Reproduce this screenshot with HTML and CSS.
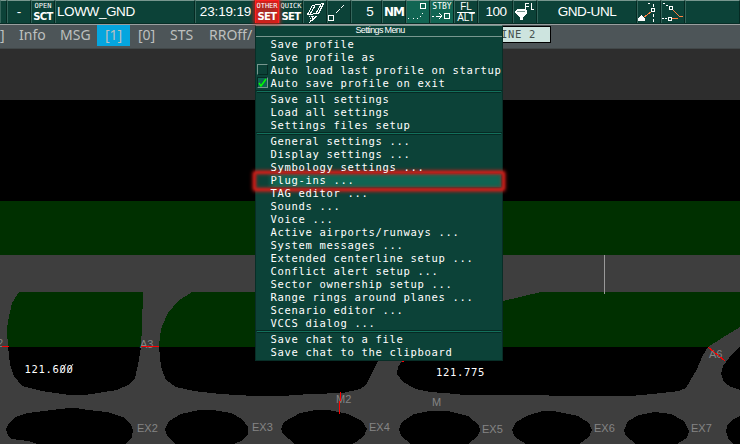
FILE: index.html
```
<!DOCTYPE html>
<html lang="en"><head><meta charset="utf-8"><title>Radar display</title><link rel="stylesheet" href="styles.css"></head>
<body>
<main class="screen">
<svg class="map" width="740" height="444" viewBox="0 0 740 444" shape-rendering="crispEdges">
<rect width="740" height="444" fill="#3e3e3e"/>
<rect y="48" width="740" height="52" fill="#2d2d2d"/>
<rect y="100" width="740" height="101" fill="#000"/>
<rect y="201" width="740" height="54" fill="#003000"/>
<path d="M8 347L7 330L8 321L12 303L19 292H143L142 326L141 347Z" fill="#003000"/>
<path d="M8 347H141L138 365L135 378L128 385L117 390L85 395H69L42 391L22 386L14 376L10 364Z"/>
<path d="M159 347L160 335L162 326L168 313L178 301L192 292H440V347Z" fill="#003000"/>
<path d="M159 347H385L378 361L366 385L360 389L343 393L310 394L282 396H255L220 394L194 391L176 387L166 380L161 367Z"/>
<path d="M440 310L503 301L541 292H740V327L722 338L708 347H440Z" fill="#003000"/>
<path d="M402 347H708L703 355L697 369L686 388L679 391L652 394L630 396H550L548 395H463L457 394L430 392L416 389L403 382L397 374L398 367L402 361Z"/>
<path d="M740 346L729 358L723 366L721 374L724 382L731 387L740 390Z"/>
<path d="M6 429L9 423L15 417L28 413L60 409L70 408H76L88 410L107 412L123 417L131 425L133 430L132 437L126 444H38L28 441L12 439L8 436Z"/>
<path d="M165 429L169 421L181 414L199 410H213L231 413L242 419L248 427L248 434L243 440L234 444H176L167 436Z"/>
<path d="M281 429L284 422L300 413L315 410H329L348 414L362 421L367 429L364 436L356 442L352 444H295L283 434Z"/>
<path d="M399 429L402 422L414 414L429 411H448L468 416L479 425L480 431L477 437L468 444H411L401 436Z"/>
<path d="M512 430L516 422L529 415L543 411H554L578 416L589 423L592 430L589 437L579 444H526L515 437Z"/>
<path d="M624 430L628 421L639 415L655 412L671 414L684 421L689 431L687 438L677 444H636L626 436Z"/>
<path d="M740 416L732 420L727 426L726 432L729 440L733 444H740Z"/>
<path d="M604.500 255V294" stroke="#999"/>
<g class="labels"><text x="-3" y="347">2</text><text x="140" y="348">A3</text><text x="137" y="432">EX2</text><text x="252" y="431">EX3</text><text x="336" y="403">M2</text><text x="369" y="431">EX4</text><text x="432" y="406">M</text><text x="482" y="433">EX5</text><text x="594" y="432">EX6</text><text x="691" y="432">EX7</text><text x="709" y="358">A6</text></g>
<g stroke="#f00"><path d="M2 346.500H9M141 346.500H159M340.500 392V401M339.500 401V414M708 347L725 361"/><path d="M402 361.500h2"/></g>
<g class="freq"><text x="24.500" y="373">121.600</text><text x="436" y="376">121.775</text></g>
<path d="M60 373L66 364M67 373L73 364" stroke="#fff" stroke-width=".8" shape-rendering="auto"/>
</svg>

<header class="toolbar">
<div class="cell w7"></div><div class="cell w24 num">-</div>
<div class="cell w24 two"><span>OPEN</span><b>SCT</b></div>
<div class="cell w140 left">LOWW_GND</div><div class="cell w60 time">23:19:19</div>
<div class="cell w24 two hot"><span>OTHER</span><b>SET</b></div>
<div class="cell w24 two"><span>QUICK</span><b>SET</b></div>
<div class="cell w24"><svg width="24" height="24"><path d="M9.500 4.500L20.500 2.500L15.500 12.500L4.500 13.500ZM12 5L7 13M18 4L13 12"/><path d="M6 15.500h8M7 17.500h5M7 19.500h3" stroke-dasharray="1 1"/><path d="M14 15L6 22M9 15V20"/></svg></div>
<div class="cell w24"><svg width="24" height="24"><path d="M1.500 14.500h5v5h-5z"/><path d="M9 12L19 2" stroke-dasharray="5 2"/></svg></div>
<div class="cell w31 five">5</div><div class="cell w24 nm">NM</div>
<div class="cell w24 lit"><svg width="24" height="24"><path d="M14.500 2.500h5v5h-5z"/><path d="M2 17.500h1M7 17.500h1M11 17.500h1M14 15.500h1M16 12.500h1"/></svg></div>
<div class="cell w24 lit stby"><span>STBY</span><svg width="24" height="12"><path d="M2 5h2M6 5h6M9 2l3 3-3 3M14.500 2.500h5v5h-5z"/></svg></div>
<div class="cell w24 flalt"><span>FL</span><span>ALT</span></div>
<div class="cell w35 time">100</div>
<div class="cell w24"><svg width="24" height="24"><path class="fill" d="M2 10L4 8H12L14 10V12L10 16V19H7V16L2 12Z"/><path d="M4 10h8" stroke="#78978f"/><path d="M12.500 8V2.500H16M13 5.500h3M18.500 2V8H21"/></svg></div>
<div class="cell w100 unl">GND-UNL</div>
<div class="cell w24"><svg width="24" height="24"><path d="M6 17L15 10" stroke="#ff8040"/><path class="fill" d="M1 20V18L4 14H5L8 18V20Z"/><path d="M14.500 7.500h3v3h-3zM16.500 13v3M16.500 18v3M16.500 3v3M11 2.500h2"/></svg></div>
<div class="cell w24"><svg width="24" height="24"><path d="M11 8L18 15L22 15M10 17.500L17 17" stroke="#ff8040"/><path d="M8.500 5.500h3v3h-3zM7.500 16.500h3v3h-3zM2 2.500h2M5 4.500h2M1 17.500h2M4 17.500h2"/></svg></div>
<div class="cell rest"></div>
</header>
<nav class="tabs"><span class="t0">]</span><span class="t1">Info</span><span class="t2">MSG</span><span class="t3">[1]</span><span class="t4">[0]</span><span class="t5">STS</span><span class="t6">RROff/</span><span class="line">LINE 2</span></nav>

<section class="menu">
<h1>Settings Menu</h1>
<div class="group"><p>Save profile</p><p>Save profile as</p><p><i class="box"></i>Auto load last profile on startup</p><p><i class="box on"><svg width="10" height="10"><path d="M1 5L3 8L8 1"/></svg></i>Auto save profile on exit</p></div>
<div class="group"><p>Save all settings</p><p>Load all settings</p><p>Settings files setup</p></div>
<div class="group"><p>General settings ...</p><p>Display settings ...</p><p>Symbology settings ...</p><p class="selected">Plug-ins ...</p><p>TAG editor ...</p><p>Sounds ...</p><p>Voice ...</p><p>Active airports/runways ...</p><p>System messages ...</p><p>Extended centerline setup ...</p><p>Conflict alert setup ...</p><p>Sector ownership setup ...</p><p>Range rings around planes ...</p><p>Scenario editor ...</p><p>VCCS dialog ...</p></div>
<div class="group"><p>Save chat to a file</p><p>Save chat to the clipboard</p></div>
</section>
</main>
</body></html>
```
FILE: styles.css
```
*, *::before, *::after { box-sizing: border-box; }
body { margin: 0; background: #3e3e3e; }
.screen { position: relative; width: 740px; height: 444px; overflow: hidden; font-family: "Liberation Sans", sans-serif; }
.map { position: absolute; top: 0; left: 0; }
.labels { fill: #858585; font: 11px "Liberation Sans", sans-serif; }
.freq { fill: #fff; font: 10.5px "DejaVu Sans Mono", monospace; letter-spacing: .68px; }
.toolbar { position: relative; display: flex; height: 24px; background: #0c4238; color: #fff; border-bottom: 1px solid #082e27; }
.cell { flex: none; display: flex; align-items: center; justify-content: center; height: 23px; padding-bottom: 1px; border-top: 1px solid #78978f; border-left: 1px solid #35655b; border-right: 1px solid #062a23; white-space: nowrap; font-size: 13.5px; overflow: hidden; }
.cell > svg { flex: none; margin-top: 2px; }
.cell svg { fill: none; stroke: #fff; shape-rendering: crispEdges; }
.cell .fill { fill: #fff; stroke: none; }
.w7 { width: 7px; } .w24 { width: 24px; } .w31 { width: 31px; } .w35 { width: 35px; } .w60 { width: 60px; } .w100 { width: 100px; } .w140 { width: 140px; }
.rest { flex: 1; }
.left { justify-content: flex-start; padding-left: 1px; letter-spacing: -.4px; }
.time { letter-spacing: -.15px; padding-left: 1px; }
.w35 { letter-spacing: -.5px; }
.five { padding-left: 7px; }
.unl { letter-spacing: -.4px; }
.two { flex-direction: column; padding-bottom: 0; font-family: "DejaVu Sans Mono", monospace; }
.two span { font-size: 7px; line-height: 9px; }
.two b { font: bold 10px/12px "DejaVu Sans", sans-serif; letter-spacing: -.6px; }
.two.hot { background: #a92c25; border-color: #ff2020; box-shadow: 0 0 4px 1px #d42018, inset 0 0 5px 2px #e31c18; z-index: 1; }
.nm { font: bold 12px "DejaVu Sans", sans-serif; letter-spacing: -1px; }
.lit { background: #116553; }
.stby { flex-direction: column; padding-bottom: 0; font: 8px/9px "DejaVu Sans Mono", monospace; }
.stby > svg { margin-top: 0; }
.flalt { flex-direction: column; padding: 1px 0 0; font-size: 10px; line-height: 10px; }
.flalt span:first-child { border-bottom: 1px solid #fff; padding: 0 3px; }
.tabs { position: relative; display: flex; align-items: center; height: 25px; padding-bottom: 2px; border-top: 1px solid #9a9f9f; border-bottom: 1px solid #414748; background: #4d5558; color: #bec0bf; font: 14px "Noto Sans", sans-serif; white-space: nowrap; }
.tabs span { flex: none; line-height: 19px; height: 21px; }
.t0 { width: 19px; } .t1 { width: 41px; } .t2 { width: 37px; }
.t3 { width: 33px; background: #05a6df; text-align: center; }
.t4 { width: 40px; padding-left: 8px; } .t5 { width: 39px; } .t6 { width: 46px; }
.tabs .line { margin-left: 236px; width: 60px; height: 17px; margin-top: -3px; border: 1px solid #000; background: #cde4df; color: #46504f; font: 10.5px/14px "DejaVu Sans Mono", monospace; text-align: right; padding-right: 14px; letter-spacing: .68px; }
.menu { position: absolute; left: 255px; top: 25px; width: 248px; height: 336px; background: #0c4238; color: #fff; border: 1px solid #082e27; border-top-color: #78978f; }
.menu h1 { margin: 0; height: 11px; border-bottom: 1px solid #78978f; text-align: center; font: 9px/9px "Liberation Sans", sans-serif; letter-spacing: -.65px; padding-left: 2px; }
.group { padding: 0 1px; margin-top: 1px; }
.group + .group { margin-top: 0; border-top: 1px solid #062a23; }
.group + .group::before { content: ""; display: block; height: 2px; border-top: 1px solid #13705c; border-bottom: 1px solid #062a23; }
.group p { position: relative; z-index: 1; margin: 0; height: 13px; padding-left: 13.500px; font: 10.5px/13px "DejaVu Sans Mono", monospace; letter-spacing: .68px; white-space: pre; }
.box { position: absolute; left: 0; top: 0; width: 11px; height: 11px; border: 1px solid #78978f; border-right-color: #062a23; border-bottom-color: #062a23; }
.box.on { background: #116553; border-color: #062a23 #78978f #78978f #062a23; }
.box svg { display: block; fill: none; stroke: #0f0; stroke-width: 1.5; }
.group .selected { background: linear-gradient(90deg, #0c4238 10px, #116553 18px); z-index: 0; }
.selected::after { content: ""; position: absolute; inset: -3px -4px -4px -4px; border: 3px solid #c91f1a; border-radius: 3px; filter: blur(.9px); box-shadow: 0 0 3px 1px #d51c17b0, inset 0 0 3px 1px #a0302799; }
```
